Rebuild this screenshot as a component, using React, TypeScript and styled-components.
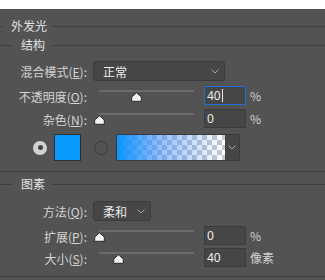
import React from 'react';
import styled, { createGlobalStyle } from 'styled-components';

const GlobalStyle = createGlobalStyle`
  html, body {
    margin: 0;
    padding: 0;
    background: #535353;
  }
  body {
    font-family: 'Noto Sans CJK SC', 'Noto Sans', sans-serif;
    font-size: 12px;
    color: #d6d6d6;
  }
`;

const TopStrip = styled.div`
  height: 9px;
  background: #ffffff;
`;

const Panel = styled.div`
  width: 325px;
  height: 271px;
  background: #535353;
  display: flex;
  flex-direction: column;
  overflow: hidden;
`;

const HeaderRow = styled.div<{ $indent: number; $top: number }>`
  display: flex;
  align-items: center;
  height: 14px;
  margin-top: ${p => p.$top}px;

  &::before {
    content: '';
    width: ${p => p.$indent}px;
    height: 1px;
    background: #414141;
  }
  &::after {
    content: '';
    flex: 1;
    height: 1px;
    background: #414141;
  }
`;

const HeaderText = styled.span<{ $padL: number; $padR: number }>`
  padding: 0 ${p => p.$padR}px 0 ${p => p.$padL}px;
  font-size: 12px;
  line-height: 14px;
  color: #e2e2e2;
`;

const Rule = styled.div<{ $top: number }>`
  height: 1px;
  background: #414141;
  margin-top: ${p => p.$top}px;
`;

const Row = styled.div<{ $top: number; $h: number }>`
  display: flex;
  align-items: flex-start;
  height: ${p => p.$h}px;
  margin-top: ${p => p.$top}px;
`;

const Label = styled.div<{ $h: number }>`
  width: 87px;
  text-align: right;
  white-space: nowrap;
  line-height: ${p => p.$h}px;
  padding-top: 1px;
  color: #d4d4d4;
  flex-shrink: 0;

  u {
    text-decoration: underline;
    text-underline-offset: 1px;
  }
`;

const Select = styled.div<{ $w: number }>`
  margin-left: 6px;
  width: ${p => p.$w}px;
  height: 20px;
  box-sizing: border-box;
  background: #464646;
  border: 1px solid #3b3b3b;
  border-radius: 3px;
  display: flex;
  align-items: center;
  justify-content: space-between;
  padding: 0 5px 0 9px;
  color: #ececec;
  font-size: 12px;
`;

const SliderWrap = styled.div`
  position: relative;
  margin-left: 12px;
  width: 95px;
  height: 19px;
  flex-shrink: 0;
`;

const Track = styled.div`
  margin-top: 4px;
  height: 2px;
  background: #6c6c6c;
`;

const Thumb = styled.svg`
  position: absolute;
  top: 6px;
  width: 11px;
  height: 10px;
`;

const NumInput = styled.div<{ $focus?: boolean }>`
  margin-left: 10px;
  width: 42px;
  height: 19px;
  box-sizing: border-box;
  background: #464646;
  border: 1px solid ${p => (p.$focus ? '#1e6fd9' : '#3b3b3b')};
  display: flex;
  align-items: center;
  padding-left: 2px;
  color: #ececec;
  font-size: 12px;
  font-family: 'Noto Sans', sans-serif;
`;

const Caret = styled.span`
  display: inline-block;
  width: 1px;
  height: 13px;
  background: #ececec;
  margin-left: 1px;
`;

const Unit = styled.div`
  margin-left: 4px;
  line-height: 20px;
  color: #d4d4d4;
  font-size: 12px;
`;

const ColorRow = styled.div`
  display: flex;
  align-items: center;
  height: 27px;
  margin-top: 6px;
  padding-left: 33px;
`;

const Radio = styled.div<{ $on?: boolean }>`
  width: 14px;
  height: 14px;
  box-sizing: border-box;
  border-radius: 50%;
  background: ${p => (p.$on ? '#d2d2d2' : 'transparent')};
  border: ${p => (p.$on ? 'none' : '1.5px solid #3c3c3c')};
  display: flex;
  align-items: center;
  justify-content: center;

  &::after {
    content: '';
    display: ${p => (p.$on ? 'block' : 'none')};
    width: 5px;
    height: 5px;
    border-radius: 50%;
    background: #444;
  }
`;

const Swatch = styled.div`
  margin-left: 7px;
  width: 27px;
  height: 27px;
  box-sizing: border-box;
  border: 1px solid #2e2e2e;
  background: #0a9bff;
`;

const GradientBox = styled.div`
  margin-left: 13px;
  display: flex;
  height: 27px;
  box-sizing: border-box;
  border: 1px solid #3b3b3b;
`;

const GradientFill = styled.div`
  width: 108px;
  height: 100%;
  background:
    linear-gradient(to right, rgba(10, 150, 255, 1) 0%, rgba(60, 140, 255, 0.55) 40%, rgba(255, 255, 255, 0) 100%),
    repeating-conic-gradient(#c9c9c9 0% 25%, #ffffff 0% 50%) 0 0 / 10px 10px;
`;

const GradientArrow = styled.div`
  width: 14px;
  background: #464646;
  display: flex;
  align-items: center;
  justify-content: center;
`;

const Chevron = () => (
  <svg width="8" height="5" viewBox="0 0 8 5">
    <polyline points="0.5,0.5 4,4 7.5,0.5" fill="none" stroke="#a8a8a8" strokeWidth="1" />
  </svg>
);

const ThumbIcon = ({ pos }: { pos: number }) => (
  <Thumb viewBox="0 0 11 10" style={{ left: `${pos * 95 - 5.5}px` }}>
    <path d="M5.5 0.8 L10.3 5 V9.3 H0.7 V5 Z" fill="#f4f4f4" stroke="#2a2a2a" strokeWidth="1" strokeLinejoin="round" />
  </Thumb>
);

interface SliderRowProps {
  label: React.ReactNode;
  pos: number;
  value: string;
  unit: string;
  top: number;
  focus?: boolean;
}

const SliderRow = ({ label, pos, value, unit, top, focus }: SliderRowProps) => (
  <Row $top={top} $h={19}>
    <Label $h={19}>{label}</Label>
    <SliderWrap>
      <Track />
      <ThumbIcon pos={pos} />
    </SliderWrap>
    <NumInput $focus={focus}>
      {value}
      {focus && <Caret />}
    </NumInput>
    <Unit>{unit}</Unit>
  </Row>
);

function App() {
  return (
    <>
      <GlobalStyle />
      <TopStrip />
      <Panel>
        <HeaderRow $indent={3} $top={10}>
          <HeaderText $padL={8} $padR={5}>外发光</HeaderText>
        </HeaderRow>
        <HeaderRow $indent={12} $top={5}>
          <HeaderText $padL={9} $padR={6}>结构</HeaderText>
        </HeaderRow>

        <Row $top={9} $h={20}>
          <Label $h={20}>混合模式(<u>E</u>):</Label>
          <Select $w={132}>
            <span>正常</span>
            <Chevron />
          </Select>
        </Row>
        <SliderRow label={<>不透明度(<u>O</u>):</>} pos={0.39} value="40" unit="%" top={5} focus />
        <SliderRow label={<>杂色(<u>N</u>):</>} pos={0} value="0" unit="%" top={4} />

        <ColorRow>
          <Radio $on />
          <Swatch />
          <Radio style={{ marginLeft: 13 }} />
          <GradientBox style={{ marginLeft: 8 }}>
            <GradientFill />
            <GradientArrow>
              <Chevron />
            </GradientArrow>
          </GradientBox>
        </ColorRow>

        <Rule $top={10} />
        <HeaderRow $indent={12} $top={5}>
          <HeaderText $padL={9} $padR={6}>图素</HeaderText>
        </HeaderRow>

        <Row $top={10} $h={20}>
          <Label $h={20}>方法(<u>Q</u>):</Label>
          <Select $w={58}>
            <span>柔和</span>
            <Chevron />
          </Select>
        </Row>
        <SliderRow label={<>扩展(<u>P</u>):</>} pos={0} value="0" unit="%" top={5} />
        <SliderRow label={<>大小(<u>S</u>):</>} pos={0.21} value="40" unit="像素" top={3} />

        <Rule $top={9} />
      </Panel>
    </>
  );
}

export default App;
